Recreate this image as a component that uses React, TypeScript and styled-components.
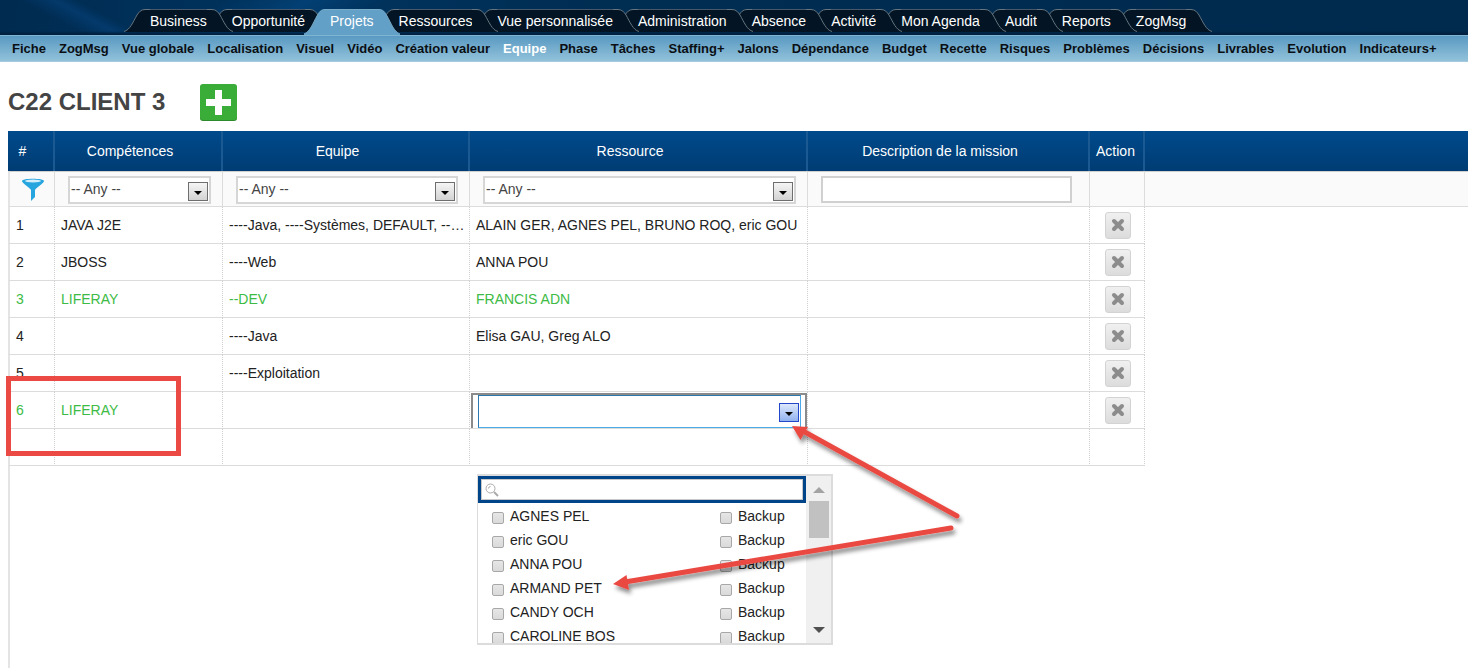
import React from "react";
import styled, { createGlobalStyle, css } from "styled-components";

const GlobalStyle = createGlobalStyle`
  *, *::before, *::after { box-sizing: border-box; }
  body { margin: 0; background: #fff; }
  body, button, input, select { font-family: Arial, "Liberation Sans", sans-serif; font-size: 14px; }
`;

const Page = styled.div`
  position: relative;
  display: flex;
  flex-direction: column;
  min-height: 100vh;
  color: #222;
`;

const TopBar = styled.header`
  height: 35px;
  padding: 9px 0 0 124px;
  background:
    linear-gradient(to bottom, transparent 31px, #00203f 34px),
    linear-gradient(28deg, transparent 30%, rgba(10, 80, 150, 0.35) 42%, transparent 50%) 0 0 / 220px 35px no-repeat,
    linear-gradient(150deg, transparent 35%, rgba(10, 90, 160, 0.3) 52%, transparent 68%) 60px 0 / 420px 35px no-repeat,
    linear-gradient(to right, #002b50 0, #003460 300px, #002d52 600px, #002a4e 100%);
`;

const TabList = styled.ul`
  display: flex;
  isolation: isolate;
  margin: 0;
  padding: 0;
  list-style: none;
`;

const Tab = styled.li<{ $depth: number }>`
  position: relative;
  display: flex;
  flex: none;
  height: 26px;
  z-index: ${(p) => p.$depth};
  & + & { margin-left: -27px; }
`;

const TabSide = styled.svg`
  flex: none;
  width: 26px;
  height: 26px;
`;

const TabLink = styled.a<{ $active?: boolean }>`
  display: block;
  height: ${(p) => (p.$active ? 26 : 23)}px;
  line-height: 22px;
  color: #fff;
  text-decoration: none;
  white-space: nowrap;
  border-top: 1px solid ${(p) => (p.$active ? "#79abc8" : "#46586a")};
  background: ${(p) => (p.$active ? "#62a0c7" : "#031525")};
`;

const SubBar = styled.nav`
  min-height: 27px;
  padding: 0 12px;
  border-top: 1px solid #7fb5d3;
  border-bottom: 1px solid #a5cade;
  background: linear-gradient(to bottom, #5999c2, #92c2da);
`;

const SubList = styled.ul`
  display: flex;
  gap: 13px;
  margin: 0;
  padding: 0;
  list-style: none;
`;

const SubLink = styled.a<{ $active?: boolean }>`
  font-size: 13px;
  font-weight: bold;
  line-height: 25px;
  white-space: nowrap;
  text-decoration: none;
  color: ${(p) => (p.$active ? "#fff" : "#0a0f14")};
`;

const TitleRow = styled.div`
  display: flex;
  align-items: center;
  gap: 35px;
  height: 69px;
  padding: 12px 8px 0;
`;

const Title = styled.h1`
  margin: 0;
  padding-bottom: 2px;
  font-size: 24px;
  line-height: 32px;
  color: #444;
`;

const AddButton = styled.button`
  width: 37px;
  height: 37px;
  padding: 0;
  border: 0;
  background: none;
  svg { display: block; }
`;

const GridArea = styled.main`
  flex: 1;
  margin-left: 8px;
  border-left: 2px solid #e4e4e4;
`;

const Table = styled.table`
  width: calc(100% + 2px);
  margin-left: -2px;
  table-layout: fixed;
  border-collapse: separate;
  border-spacing: 0;
`;

const HeadRow = styled.tr`
  background: linear-gradient(to bottom, #004a8c, #003c73);
`;

const HeadCell = styled.th<{ $tight?: boolean }>`
  height: 40px;
  padding: ${(p) => (p.$tight ? "0 6px 0 4px" : "0 16px 0 0")};
  border-right: 2px solid #1b5992;
  font-weight: normal;
  color: #fff;
  &:last-child { border-right: 0; }
`;

const FilterCell = styled.td`
  height: 36px;
  padding: 1px 11px 0 13px;
  background: #fafafa;
  border-top: 1px solid #d0d0d0;
  border-bottom: 1px solid #dcdcdc;
  border-right: 1px solid #dcdcdc;
  &:first-child { padding: 0 0 0 12px; border-left: 2px solid #e4e4e4; }
  &:last-child { border-right: 0; }
  svg { display: block; }
`;

const PickerBox = styled.div<{ $open?: boolean }>`
  position: relative;
  height: 28px;
  ${(p) =>
    p.$open &&
    css`
      height: 35px;
      padding: 0 4px 0 5px;
      border: 2px solid #8a8a8a;
      border-width: 2px 2px 0 2px;
      background: #fff;
    `}
`;

const Picker = styled.select<{ $open?: boolean }>`
  display: block;
  width: 100%;
  height: 100%;
  padding: 0 24px 2px 1px;
  appearance: none;
  border: 2px solid #d6d6d6;
  border-radius: 0;
  background: #fff;
  color: #444;
  outline: none;
  ${(p) =>
    p.$open &&
    css`
      border: 1px solid #4daae8;
      border-left-color: #2b77ae;
      border-top-color: #2b77ae;
    `}
`;

const PickerArrow = styled.svg<{ $open?: boolean }>`
  position: absolute;
  right: ${(p) => (p.$open ? 6 : 3)}px;
  top: ${(p) => (p.$open ? 8 : 6)}px;
  pointer-events: none;
`;

const FilterInput = styled.input`
  display: block;
  width: 251px;
  height: 27px;
  border: 2px solid #d0d0d0;
  background: #fff;
`;

const BodyCell = styled.td<{ $flush?: boolean }>`
  height: 37px;
  padding: ${(p) => (p.$flush ? "1px 0 0 1px" : "0 3px 0 6px")};
  border-bottom: 1px solid #dcdcdc;
  border-right: 1px dotted #cfcfcf;
  white-space: nowrap;
  overflow: ${(p) => (p.$flush ? "visible" : "hidden")};
  text-overflow: ellipsis;
  position: ${(p) => (p.$flush ? "relative" : "static")};
  &:first-child { border-left: 2px solid #e4e4e4; }
`;

const BodyRow = styled.tr<{ $green?: boolean }>`
  color: ${(p) => (p.$green ? "#3dbb45" : "#222")};
`;

const DeleteCell = styled(BodyCell)`
  padding: 0 0 0 15px;
`;

const DeleteButton = styled.button`
  display: grid;
  place-items: center;
  width: 26px;
  height: 27px;
  padding: 0;
  border: 1px solid #d3d3d3;
  border-radius: 3px;
  background: linear-gradient(to bottom, #f0f0f0, #dcdcdc);
`;

const Dropdown = styled.div`
  position: absolute;
  z-index: 3;
  top: 82px;
  left: 7px;
  display: flex;
  width: 356px;
  height: 171px;
  overflow: hidden;
  border: 2px solid #dcdcdc;
  border-left-width: 1px;
  background: #fff;
`;

const DropBody = styled.div`
  flex: 1;
`;

const SearchBox = styled.label`
  display: flex;
  align-items: center;
  gap: 4px;
  height: 27px;
  padding: 0 4px;
  border: 3px solid #00458a;
  box-shadow: inset 0 0 0 1px #c8c8c8;
  svg { flex: none; }
`;

const SearchInput = styled.input`
  flex: 1;
  min-width: 0;
  height: 18px;
  padding: 0;
  border: 0;
  outline: none;
  background: none;
`;

const OptionRow = styled.div`
  display: grid;
  grid-template-columns: 228px 1fr;
  height: 24px;
  padding-left: 14px;
`;

const Options = styled.div`
  padding-top: 1px;
`;

const Option = styled.label`
  display: flex;
  gap: 6px;
  line-height: 24px;
  color: #222;
`;

const Check = styled.input`
  appearance: none;
  width: 12px;
  height: 12px;
  margin: 8px 0 0;
  border: 1px solid #a8a8a8;
  border-radius: 2px;
  background: linear-gradient(to bottom, #e6e6e6, #dadada);
`;

const ScrollTrack = styled.div`
  display: flex;
  flex-direction: column;
  align-items: center;
  width: 25px;
  padding-top: 11px;
  background: #f0f0f0;
`;

const ScrollThumb = styled.div`
  width: 20px;
  height: 37px;
  margin: 8px 0 89px;
  background: #c1c1c1;
`;

const Annotations = styled.svg`
  position: absolute;
  z-index: 5;
  top: 0;
  left: 0;
  pointer-events: none;
`;

const tabs = [
  "Business", "Opportunité", "Projets", "Ressources", "Vue personnalisée", "Administration",
  "Absence", "Activité", "Mon Agenda", "Audit", "Reports", "ZogMsg",
];

const subItems = [
  "Fiche", "ZogMsg", "Vue globale", "Localisation", "Visuel", "Vidéo", "Création valeur", "Equipe",
  "Phase", "Tâches", "Staffing+", "Jalons", "Dépendance", "Budget", "Recette", "Risques",
  "Problèmes", "Décisions", "Livrables", "Evolution", "Indicateurs+",
];

const columns = ["#", "Compétences", "Equipe", "Ressource", "Description de la mission", "Action"];

interface Row {
  id: number;
  skill: string;
  team: string;
  people: string;
  green?: boolean;
  editing?: boolean;
}

const rows: Row[] = [
  { id: 1, skill: "JAVA J2E", team: "----Java, ----Systèmes, DEFAULT, --DEV", people: "ALAIN GER, AGNES PEL, BRUNO ROQ, eric GOU" },
  { id: 2, skill: "JBOSS", team: "----Web", people: "ANNA POU" },
  { id: 3, skill: "LIFERAY", team: "--DEV", people: "FRANCIS ADN", green: true },
  { id: 4, skill: "", team: "----Java", people: "Elisa GAU, Greg ALO" },
  { id: 5, skill: "", team: "----Exploitation", people: "" },
  { id: 6, skill: "LIFERAY", team: "", people: "", green: true, editing: true },
];

const people = ["AGNES PEL", "eric GOU", "ANNA POU", "ARMAND PET", "CANDY OCH", "CAROLINE BOS"];

function TabEdge({ side, active }: { side: "left" | "right"; active: boolean }) {
  const fill = active ? "#62a0c7" : "#031525";
  const stroke = active ? "#79abc8" : "#66757f";
  const curve = active
    ? "M0 25 C6 23 9 14 13 7 C15 3 17 .5 21 .5 H26"
    : "M0 22.5 C6 21 9 13 13 6 C15 3 17 .5 21 .5 H26";
  return (
    <TabSide viewBox="0 0 26 26" aria-hidden="true">
      <g transform={side === "right" ? "translate(26 0) scale(-1 1)" : undefined}>
        <path d={`${curve} V${active ? 26 : 23} H0 Z`} fill={fill} />
        <path d={curve} fill="none" stroke={stroke} />
      </g>
    </TabSide>
  );
}

function FilterPicker({ label, open }: { label: string; open?: boolean }) {
  return (
    <PickerBox $open={open}>
      <Picker $open={open} aria-label={label}>
        <option>{open ? "" : "-- Any --"}</option>
      </Picker>
      <PickerArrow $open={open} width="20" height="19" viewBox="0 0 20 19">
        <defs>
          <linearGradient id={open ? "arrowBlue" : "arrowGray"} x1="0" y1="0" x2="0" y2="1">
            <stop offset="0" stopColor={open ? "#dfeafc" : "#f6f6f6"} />
            <stop offset="1" stopColor={open ? "#8fb0ee" : "#d2d2d2"} />
          </linearGradient>
        </defs>
        <rect x=".5" y=".5" width="19" height="18" fill={open ? "url(#arrowBlue)" : "url(#arrowGray)"} stroke={open ? "#2446c8" : "#6e6e6e"} />
        <path d="M6 9 H14 L10 13 Z" fill="#000" />
      </PickerArrow>
    </PickerBox>
  );
}

function ResourceDropdown() {
  return (
    <Dropdown>
      <DropBody>
        <SearchBox>
          <svg width="14" height="14" viewBox="0 0 14 14" fill="none" stroke="#aaa">
            <circle cx="5.5" cy="5.5" r="4.5" />
            <path d="M3.5 5.5 A2 2 0 0 1 5.5 3.5" />
            <path d="M9 9 L13 13" strokeWidth="2" />
          </svg>
          <SearchInput type="text" aria-label="Rechercher une ressource" />
        </SearchBox>
        <Options>
          {people.map((name) => (
            <OptionRow key={name}>
              <Option><Check type="checkbox" />{name}</Option>
              <Option><Check type="checkbox" />Backup</Option>
            </OptionRow>
          ))}
        </Options>
      </DropBody>
      <ScrollTrack>
        <svg width="12" height="6"><path d="M0 6 L6 0 L12 6 Z" fill="#a3a3a3" /></svg>
        <ScrollThumb />
        <svg width="12" height="6"><path d="M0 0 L6 6 L12 0 Z" fill="#505050" /></svg>
      </ScrollTrack>
    </Dropdown>
  );
}

export default function App() {
  return (
    <>
      <GlobalStyle />
      <Page>
        <TopBar>
          <TabList>
            {tabs.map((tab, i) => {
              const active = tab === "Projets";
              return (
                <Tab key={tab} $depth={active ? tabs.length + 1 : tabs.length - i}>
                  <TabEdge side="left" active={active} />
                  <TabLink href="#" $active={active}>{tab}</TabLink>
                  <TabEdge side="right" active={active} />
                </Tab>
              );
            })}
          </TabList>
        </TopBar>
        <SubBar>
          <SubList>
            {subItems.map((item) => (
              <li key={item}><SubLink href="#" $active={item === "Equipe"}>{item}</SubLink></li>
            ))}
          </SubList>
        </SubBar>
        <TitleRow>
          <Title>C22 CLIENT 3</Title>
          <AddButton aria-label="Ajouter">
            <svg width="37" height="37" viewBox="0 0 37 37">
              <rect x="0" y="1" width="37" height="36" rx="3" fill="#2c8a2b" />
              <rect x="0" y="0" width="37" height="36" rx="3" fill="#3aac38" />
              <path d="M15 6 H22 V15 H31 V22 H22 V31 H15 V22 H6 V15 H15 Z" fill="#fff" />
            </svg>
          </AddButton>
        </TitleRow>
        <GridArea>
          <Table>
            <colgroup>
              <col style={{ width: 47 }} />
              <col style={{ width: 168 }} />
              <col style={{ width: 247 }} />
              <col style={{ width: 338 }} />
              <col style={{ width: 282 }} />
              <col style={{ width: 55 }} />
              <col />
            </colgroup>
            <thead>
              <HeadRow>
                {columns.map((c) => <HeadCell key={c} scope="col" $tight={c === "Action"}>{c}</HeadCell>)}
                <HeadCell as="td" />
              </HeadRow>
            </thead>
            <tbody>
              <tr>
                <FilterCell>
                  <svg width="22" height="23" viewBox="0 0 22 23">
                    <path d="M0 3 C0 0 22 0 22 3 C22 5 14 10 13 12 V19 L9 23 V12 C8 10 0 5 0 3 Z" fill="#27a5df" />
                    <ellipse cx="11" cy="3" rx="8" ry="1.4" fill="#d5eefa" />
                  </svg>
                </FilterCell>
                <FilterCell><FilterPicker label="Compétences" /></FilterCell>
                <FilterCell><FilterPicker label="Equipe" /></FilterCell>
                <FilterCell><FilterPicker label="Ressource" /></FilterCell>
                <FilterCell><FilterInput type="text" aria-label="Description de la mission" /></FilterCell>
                <FilterCell />
                <FilterCell />
              </tr>
              {rows.map((r) => (
                <BodyRow key={r.id} $green={r.green}>
                  <BodyCell>{r.id}</BodyCell>
                  <BodyCell>{r.skill}</BodyCell>
                  <BodyCell>{r.team}</BodyCell>
                  {r.editing ? (
                    <BodyCell $flush>
                      <FilterPicker label="Ressource de la ligne 6" open />
                      <ResourceDropdown />
                    </BodyCell>
                  ) : (
                    <BodyCell>{r.people}</BodyCell>
                  )}
                  <BodyCell />
                  <DeleteCell>
                    <DeleteButton aria-label={`Supprimer la ligne ${r.id}`}>
                      <svg width="14" height="14" viewBox="0 0 14 14">
                        <path d="M3 3 L11 11 M11 3 L3 11" stroke="#8c8c8c" strokeWidth="4" strokeLinecap="round" />
                      </svg>
                    </DeleteButton>
                  </DeleteCell>
                </BodyRow>
              ))}
              <BodyRow>
                {columns.map((c) => <BodyCell key={c} />)}
              </BodyRow>
            </tbody>
          </Table>
        </GridArea>
        <Annotations width="965" height="600" viewBox="0 0 965 600" aria-hidden="true">
          <defs>
            <filter id="soft" x="-10%" y="-10%" width="120%" height="130%">
              <feDropShadow dx="2" dy="4" stdDeviation="2" floodColor="#000" floodOpacity=".45" />
            </filter>
          </defs>
          <rect x="8.5" y="378.5" width="170" height="75" fill="none" stroke="#ea4a43" strokeWidth="5" />
          <g filter="url(#soft)" stroke="#ea4a43" fill="#ea4a43" strokeLinecap="round">
            <path d="M957 516 L803 431" strokeWidth="5" />
            <path d="M792 426 L808 427 L800.500 440 Z" stroke="none" />
            <path d="M951 528 L625 582" strokeWidth="5" />
            <path d="M613 584 L626.500 575 L629 590 Z" stroke="none" />
          </g>
        </Annotations>
      </Page>
    </>
  );
}
